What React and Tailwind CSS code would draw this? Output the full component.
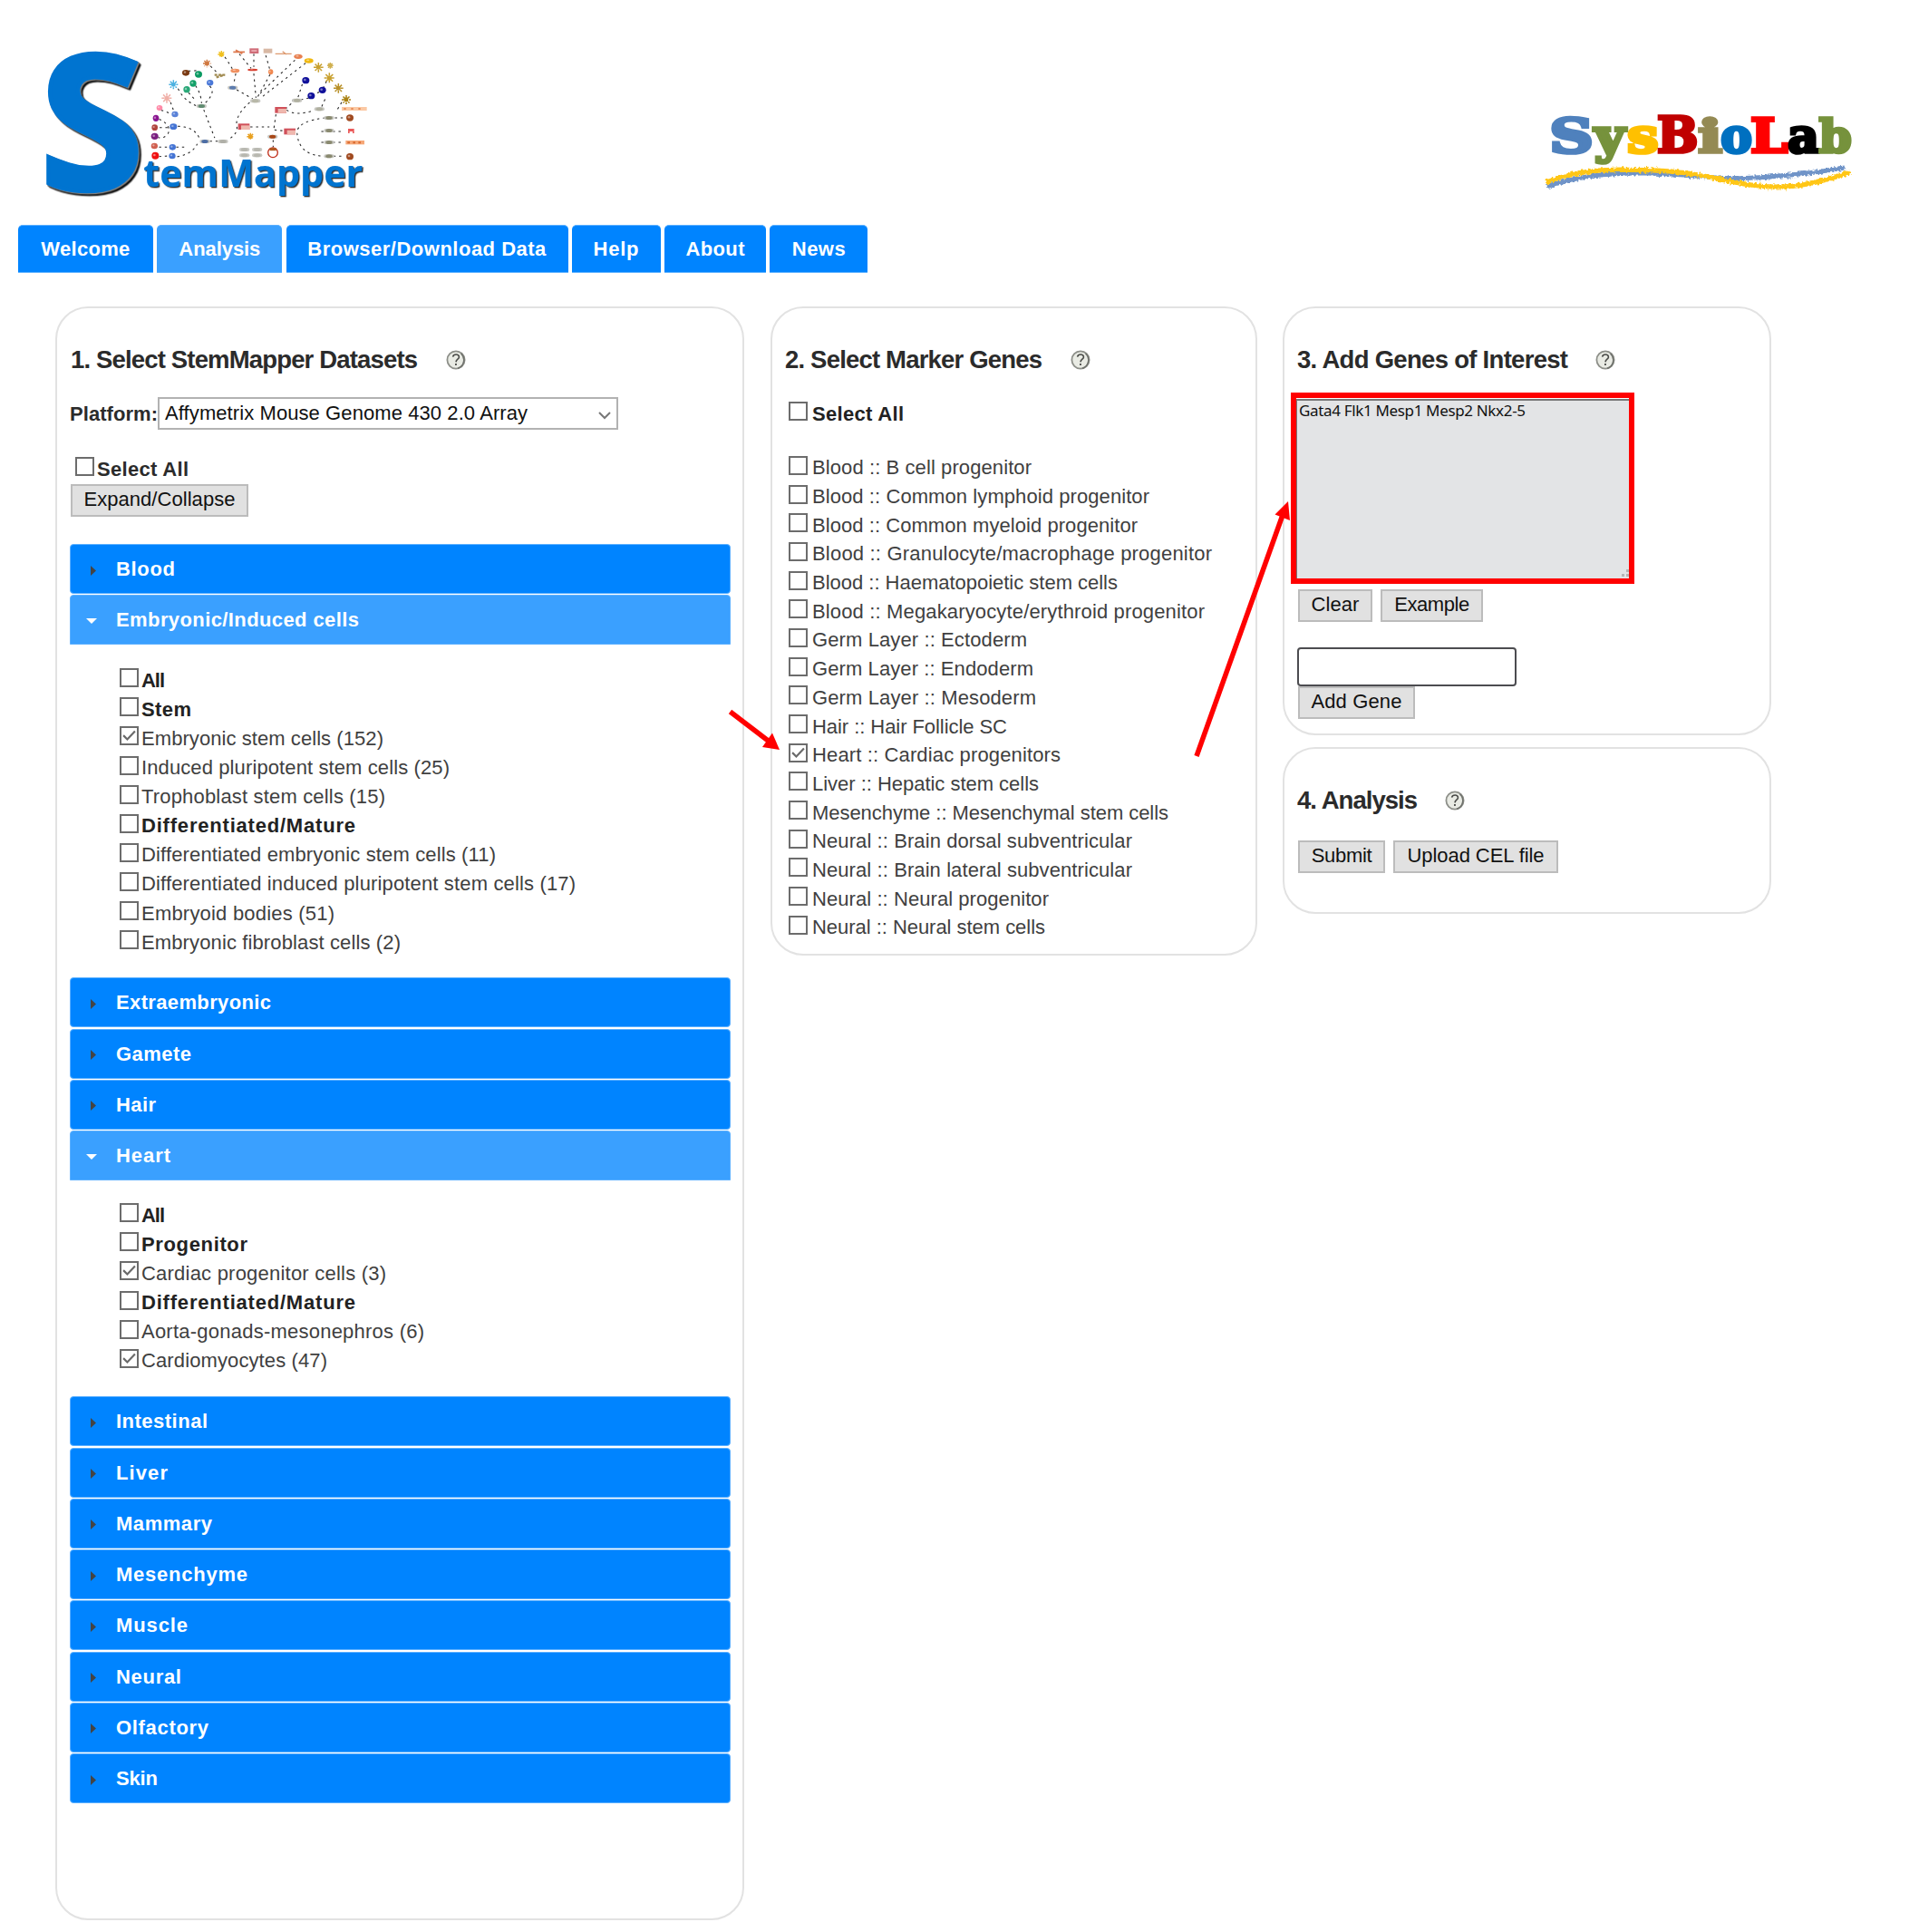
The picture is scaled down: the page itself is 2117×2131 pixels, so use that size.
import React, { useLayoutEffect, useRef } from "react";

/* Text tracked out (or in) so that it fills exactly `w` pixels. */
function Fit({ w, className = "", children }) {
  const ref = useRef(null);
  useLayoutEffect(() => {
    const el = ref.current;
    el.style.letterSpacing = "0px";
    const natural = el.getBoundingClientRect().width;
    el.style.letterSpacing = (w - natural) / Math.max(1, children.length - 1) + "px";
  }, [w, children]);
  return (
    <span ref={ref} className={"inline-block whitespace-pre " + className}>
      {children}
    </span>
  );
}

const blobs = [
  ["#7a3a12", 525, 151, 12, 10], ["#0a9a62", 567, 156, 12, 11], ["#12a068", 549, 186, 11, 11], ["#2aa878", 528, 206, 11, 11],
  ["#4a78d8", 605, 184, 11, 10], ["#5a82d8", 489, 288, 11, 10], ["#4474d4", 484, 329, 12, 10], ["#4474d4", 481, 397, 11, 10], ["#4474d4", 480, 426, 11, 10],
  ["#ff8aa8", 438, 267, 10, 9], ["#8a1590", 426, 301, 10, 11], ["#b0443c", 422, 332, 10, 10], ["#7a2080", 422, 361, 12, 11], ["#d06050", 421, 393, 11, 10], ["#f01010", 424, 425, 12, 12],
  ["#10109a", 922, 176, 12, 11], ["#10109a", 977, 208, 12, 11], ["#10109a", 940, 227, 12, 11],
  ["#a04a20", 1068, 300, 12, 11], ["#a04a20", 1068, 428, 12, 11], ["#e88050", 897, 97, 14, 8], ["#f0b810", 932, 111, 15, 8],
  ["#f09060", 688, 144, 15, 7], ["#d84030", 746, 141, 17, 4], ["#f08850", 806, 148, 8, 9],
];
const pills = [
  ["#5d7cae", 680, 200], ["#b8b8a8", 755, 244], ["#5f8a70", 577, 261], ["#4d6ea5", 588, 378], ["#b0b0a8", 648, 378],
  ["#b0b0a0", 893, 242], ["#b0b0a0", 967, 271], ["#8a8a70", 999, 300], ["#8a8a70", 999, 342], ["#8a8a70", 999, 381], ["#8a8a70", 999, 427],
  ["#b8b8b0", 719, 405], ["#b8b8b0", 761, 405], ["#b8b8b0", 719, 424], ["#b8b8b0", 761, 424], ["#a84818", 812, 362],
];
const stars = [
  ["#f0c020", 643, 90, 12], ["#d07840", 595, 120, 13], ["#4ab0e0", 484, 190, 15], ["#f0b0a8", 462, 235, 17],
  ["#c8a030", 964, 133, 16], ["#d0b050", 1003, 127, 10], ["#c8a030", 1000, 168, 17], ["#b89028", 1030, 202, 16], ["#a88010", 1056, 240, 15], ["#e8a020", 739, 362, 12],
];
const links = [
  "M655 100 Q672 125 680 140", "M608 130 L628 150", "M703 90 L740 135", "M750 90 V130", "M790 95 L803 140", "M690 155 L683 190",
  "M695 208 L745 236", "M750 155 L757 232", "M803 158 L762 232", "M885 110 L765 225", "M920 120 L778 230", "M535 145 L572 143",
  "M558 195 Q575 220 577 250", "M605 196 Q625 215 590 250", "M500 205 Q520 245 565 262", "M535 218 L560 245", "M585 275 L620 365",
  "M735 250 Q690 290 693 325 Q700 350 668 370", "M475 250 L486 280", "M445 275 Q462 280 477 288", "M438 305 Q480 325 465 355 Q450 370 435 365",
  "M440 332 H470", "M500 328 Q555 330 570 368", "M438 397 H525", "M438 428 L470 426", "M498 428 Q545 420 562 388", "M606 377 H632",
  "M740 330 H800", "M823 290 L815 345", "M855 270 Q890 240 878 243", "M860 275 Q890 295 950 275", "M820 340 L850 343",
  "M910 190 L897 230", "M930 235 L905 240", "M965 215 L950 222", "M990 180 L980 200", "M985 240 L975 262", "M1040 250 L1025 275",
  "M985 300 Q900 310 893 345 Q895 425 985 427", "M1020 300 H1052", "M975 345 H1045", "M975 381 H1045", "M1015 427 H1050", "M814 375 V395",
];

function StemMapperLogo() {
  return (
    <svg viewBox="0 0 1200 630" className="h-[210px] w-[400px] overflow-visible" role="img" aria-label="StemMapper">
      <g fill="none" stroke="#222" strokeWidth="3.2" strokeDasharray="4 15" strokeLinecap="square">
        {links.map((d) => <path key={d} d={d} />)}
      </g>
      {blobs.map(([c, x, y, rx, ry]) => (
        <g key={x + "-" + y}>
          <ellipse cx={x} cy={y} rx={rx} ry={ry} fill={c} />
          <ellipse cx={x - 3} cy={y - 2} rx={rx / 3} ry={ry / 3} fill="#fff" opacity=".45" />
        </g>
      ))}
      {pills.map(([c, x, y]) => (
        <g key={x + "-" + y}>
          <rect x={x - 17} y={y - 6} width="34" height="12" rx="6" fill="#c9c9c4" />
          <ellipse cx={x} cy={y} rx="11" ry="6" fill={c} />
        </g>
      ))}
      {stars.map(([c, x, y, r]) => (
        <g key={x + "-" + y} stroke={c} strokeWidth="4.5">
          <path d={`M${x - r} ${y}H${x + r}M${x} ${y - r}V${y + r}M${x - r * 0.7} ${y - r * 0.7}L${x + r * 0.7} ${y + r * 0.7}M${x + r * 0.7} ${y - r * 0.7}L${x - r * 0.7} ${y + r * 0.7}`} strokeDasharray="9 3" />
          <circle cx={x} cy={y} r={r / 3} fill={c} />
        </g>
      ))}
      {[[820, 264], [698, 319], [850, 335]].map(([x, y]) => (
        <g key={x}>
          <rect x={x} y={y} width="38" height="20" fill="#d0505a" />
          <rect x={x + 10} y={y + 6} width="28" height="14" fill="#efb8ae" />
        </g>
      ))}
      <rect x="736" y="70" width="30" height="17" fill="#cf6c78" />
      <path d="M742 78H760" stroke="#f4c0c4" strokeWidth="4" />
      <rect x="782" y="71" width="29" height="15" fill="#d8b8a4" />
      <path d="M682 82H720M690 76L712 88" stroke="#dd7a50" strokeWidth="5" />
      <path d="M821 88H875M845 80L858 90" stroke="#dd9a70" strokeWidth="4" />
      <path d="M620 158H658M626 166L652 158" stroke="#a08a50" strokeWidth="7" strokeDasharray="9 4" />
      <rect x="1041" y="264" width="83" height="12" fill="#fbc9a4" />
      <path d="M1048 270H1116" stroke="#e07840" strokeWidth="4" strokeDasharray="7 17" />
      <path d="M1062 336H1082V351H1077V345H1067V351H1062Z" fill="#ea5b5b" />
      <rect x="1054" y="375" width="62" height="13" fill="#f6a878" />
      <path d="M1060 382H1112" stroke="#d86a30" strokeWidth="6" strokeDasharray="8 10" />
      <circle cx="813" cy="415" r="16" fill="none" stroke="#c0301c" strokeWidth="4" />
      <path d="M803 404H824" stroke="#b05a20" strokeWidth="9" />
      <g fontFamily="'Open Sans','Noto Sans',sans-serif" fontWeight="700" fill="#0074d0" stroke="#0074d0">
        <text x="42" y="538" fontSize="622" textLength="344" lengthAdjust="spacingAndGlyphs" strokeWidth="14" className="[filter:drop-shadow(4px_4px_0_#808080)_drop-shadow(5px_5px_0_#000)]">S</text>
        <text x="385" y="527" fontSize="124" textLength="726" lengthAdjust="spacingAndGlyphs" strokeWidth="0.5" className="[filter:drop-shadow(4px_4px_0_#333)]">temMapper</text>
      </g>
    </svg>
  );
}

const labLetters = [
  ["S", 88, 146, "#4f81bd", 158], ["y", 236, 102, "#76923c", 156], ["s", 345, 104, "#ffc000", 154],
  ["B", 444, 136, "#c00000", 160], ["i", 580, 80, "#948a54", 150], ["o", 655, 104, "#0070c0", 154],
  ["L", 753, 124, "#ff0000", 156], ["a", 877, 104, "#000000", 156], ["b", 980, 108, "#76923c", 150],
];

function SysBioLabLogo() {
  return (
    <svg viewBox="0 0 1200 360" className="h-[120px] w-[400px] overflow-visible" role="img" aria-label="SysBioLab">
      <defs>
        <filter id="crayon" x="-5%" y="-30%" width="110%" height="160%">
          <feTurbulence type="fractalNoise" baseFrequency="0.12" numOctaves="2" seed="4" result="n" />
          <feDisplacementMap in="SourceGraphic" in2="n" scale="16" xChannelSelector="R" yChannelSelector="G" />
        </filter>
      </defs>
      <g fontFamily="'DejaVu Serif',serif" fontWeight="700">
        {labLetters.map(([ch, x, w, c, size]) => (
          <text key={x} x={x} y="174" fontSize={size} textLength={w} lengthAdjust="spacingAndGlyphs" fill={c} stroke={c} strokeWidth="11" strokeLinejoin="miter">{ch}</text>
        ))}
      </g>
      <g fill="none" filter="url(#crayon)">
        <path d="M80 287 C180 255 260 243 400 243 C560 245 610 262 720 260 C860 256 950 245 1065 225" stroke="#6f94c8" strokeWidth="15" />
        <path d="M75 273 C170 240 230 230 350 232 C560 232 620 260 740 280 C860 300 950 285 1083 240" stroke="#ffc619" strokeWidth="16" />
      </g>
    </svg>
  );
}

function HelpIcon() {
  return (
    <svg viewBox="0 0 22 22" className="size-[22px] shrink-0">
      <circle cx="11" cy="11" r="9.6" fill="#e9ebe4" stroke="#8d8f89" strokeWidth="1.8" />
      <path d="M16.5 4A9.5 9.5 0 0 1 13 20.2" fill="none" stroke="#6e706b" strokeWidth="1.5" />
      <path d="M7.6 7.6C8 5.6 9.6 5 11.2 5C13.2 5 14.6 6.2 14.4 8.1C14.2 10.2 11.2 10.3 11 13.4" fill="none" stroke="#4a4b48" strokeWidth="1.6" />
      <rect x="10" y="15" width="1.9" height="1.9" fill="#4a4b48" />
    </svg>
  );
}

function Box({ checked }) {
  return (
    <span className="-mt-[5px] flex size-[21px] shrink-0 items-center justify-center border-2 border-[#6c6c6c] bg-white">
      {checked && (
        <svg viewBox="0 0 18 18" className="size-[17px] shrink-0">
          <path d="M2.2 8.6L6.8 13.2L15.8 3.8" fill="none" stroke="#6a6a6a" strokeWidth="2.3" />
        </svg>
      )}
    </span>
  );
}

function Heading({ w, gap, children }) {
  return (
    <h2 className="flex h-8 items-center text-[27.5px] font-bold leading-8 text-[#2b2b2b]">
      <Fit w={w}>{children}</Fit>
      <span className={gap}><HelpIcon /></span>
    </h2>
  );
}

function Button({ className, w, children }) {
  return (
    <button className={"flex h-9 items-center justify-center border-2 border-[#bcbcbc] bg-[#e1e1e1] pb-[2px] text-[22px] leading-none text-[#111] " + className}>
      <Fit w={w}>{children}</Fit>
    </button>
  );
}

const tabs = [
  ["Welcome", "w-[149px]", 98], ["Analysis", "w-[138px] bg-[#3aa0ff]", 90], ["Browser/Download Data", "w-[311px]", 263],
  ["Help", "w-[98px]", 50], ["About", "w-[112px]", 65], ["News", "w-[108px]", 59],
];

const embryonic = [
  ["All", 26, "b"], ["Stem", 55, "b"], ["Embryonic stem cells (152)", 267, "", true], ["Induced pluripotent stem cells (25)", 340],
  ["Trophoblast stem cells (15)", 269], ["Differentiated/Mature", 236, "b"], ["Differentiated embryonic stem cells (11)", 391],
  ["Differentiated induced pluripotent stem cells (17)", 479], ["Embryoid bodies (51)", 213], ["Embryonic fibroblast cells (2)", 286],
];
const heart = [
  ["All", 26, "b"], ["Progenitor", 117, "b"], ["Cardiac progenitor cells (3)", 270, "", true], ["Differentiated/Mature", 236, "b"],
  ["Aorta-gonads-mesonephros (6)", 312], ["Cardiomyocytes (47)", 205, "", true],
];
const groups = [
  ["Blood", 65], ["Embryonic/Induced cells", 268, embryonic, "pt-[23px] pb-[22px]"], ["Extraembryonic", 171], ["Gamete", 83], ["Hair", 44],
  ["Heart", 60, heart, "pt-[22px] pb-[22.4px]"], ["Intestinal", 101], ["Liver", 57], ["Mammary", 106], ["Mesenchyme", 145],
  ["Muscle", 79], ["Neural", 72], ["Olfactory", 102], ["Skin", 46],
];
const markers = [
  ["Blood :: B cell progenitor", 242], ["Blood :: Common lymphoid progenitor", 372], ["Blood :: Common myeloid progenitor", 359],
  ["Blood :: Granulocyte/macrophage progenitor", 441], ["Blood :: Haematopoietic stem cells", 337], ["Blood :: Megakaryocyte/erythroid progenitor", 433],
  ["Germ Layer :: Ectoderm", 237], ["Germ Layer :: Endoderm", 244], ["Germ Layer :: Mesoderm", 247], ["Hair :: Hair Follicle SC", 215],
  ["Heart :: Cardiac progenitors", 274, true], ["Liver :: Hepatic stem cells", 250], ["Mesenchyme :: Mesenchymal stem cells", 393],
  ["Neural :: Brain dorsal subventricular", 353], ["Neural :: Brain lateral subventricular", 353], ["Neural :: Neural progenitor", 261], ["Neural :: Neural stem cells", 257],
];

function Group({ name, w, rows, pad }) {
  return (
    <div>
      <div className={"flex h-[55px] items-center border border-[#5cb0ff] " + (rows ? "rounded-t-[4px] bg-[#3aa0ff]" : "rounded-[4px] bg-[#0084ff]")}>
        <span className="flex w-[50px] items-center pl-[17px] pt-[3px]">
          {rows ? (
            <svg viewBox="0 0 12 6" className="h-[6px] w-[12px]"><path d="M0 0H12L6 6Z" fill="#fff" /></svg>
          ) : (
            <svg viewBox="0 0 6 11" className="ml-[5px] h-[11px] w-[6px]"><path d="M0 0L6 5.5L0 11Z" fill="#444" /></svg>
          )}
        </span>
        <Fit w={w} className="text-[22px] font-bold text-white">{name}</Fit>
      </div>
      {rows && (
        <div className={"pl-[55px] " + pad}>
          {rows.map(([label, lw, bold, checked], i) => (
            <label key={i} className="flex h-[32.1px] items-center gap-[3px]">
              <Box checked={checked} />
              <Fit w={lw} className={bold ? "text-[22px] font-bold text-[#222]" : "text-[22px] text-[#404040]"}>{label}</Fit>
            </label>
          ))}
        </div>
      )}
    </div>
  );
}

export default function App() {
  return (
    <div className="relative h-[2131px] w-[2117px] overflow-hidden bg-white font-['Liberation_Sans',Arial,sans-serif]">
      <header className="flex h-[248px] justify-between pl-[30px] pr-[37px]">
        <div className="pt-[30px]"><StemMapperLogo /></div>
        <div className="pt-[110px]"><SysBioLabLogo /></div>
      </header>

      <nav className="flex gap-[4.3px] pl-[20px]">
        {tabs.map(([t, cls, w]) => (
          <a key={t} className={"flex h-[53px] items-center justify-center rounded-t-[5px] border-y border-[#5cb0ff] text-[22px] font-bold text-white " + (t === "Analysis" ? cls : cls + " bg-[#0084ff]")}>
            <Fit w={w}>{t}</Fit>
          </a>
        ))}
      </nav>

      <main className="mt-[37px] flex items-start gap-[28px] pl-[61px]">
        <section className="h-[1780px] w-[760px] rounded-[36px] border-2 border-[#e2e2e2] pl-[14px] pt-[41px]">
          <div className="pl-px"><Heading w={383} gap="ml-[32px]">1. Select StemMapper Datasets</Heading></div>
          <div className="mt-[25px] flex h-[36px] items-center">
            <Fit w={97} className="text-[22px] font-bold text-[#2b2b2b]">Platform:</Fit>
            <div className="flex h-[36px] w-[508px] items-center justify-between border-2 border-[#b2b2b2] pl-[6px] pr-[6px] text-[22px] leading-none text-[#111]">
              <Fit w={400}>Affymetrix Mouse Genome 430 2.0 Array</Fit>
              <svg viewBox="0 0 14 10" className="mt-1 h-[10px] w-[14px]"><path d="M1 2L7 8L13 2" fill="none" stroke="#777" strokeWidth="2" /></svg>
            </div>
          </div>
          <label className="mt-[27px] flex h-[32px] items-center gap-[3px] pl-[6px]">
            <Box />
            <Fit w={101} className="text-[22px] font-bold text-[#2b2b2b]">Select All</Fit>
          </label>
          <div className="mt-px pl-px"><Button className="w-[196px]" w={167}>Expand/Collapse</Button></div>
          <div className="mt-[30px] flex w-[729px] flex-col gap-[1.25px]">
            {groups.map(([name, w, rows, pad]) => <Group key={name} name={name} w={w} rows={rows} pad={pad} />)}
          </div>
        </section>

        <section className="ml-px h-[716px] w-[537px] rounded-[36px] border-2 border-[#e2e2e2] pl-[14px] pt-[41px]">
          <Heading w={284} gap="ml-[32px]">2. Select Marker Genes</Heading>
          <label className="mt-[27px] flex h-[32px] items-center gap-[5px] pl-[4px]">
            <Box />
            <Fit w={101} className="text-[22px] font-bold text-[#222]">Select All</Fit>
          </label>
          <div className="mt-[28px] pl-[4px]">
            {markers.map(([label, w, checked]) => (
              <label key={label} className="flex h-[31.7px] items-center gap-[5px]">
                <Box checked={checked} />
                <Fit w={w} className="text-[22px] text-[#404040]">{label}</Fit>
              </label>
            ))}
          </div>
        </section>

        <div className="flex flex-col gap-[13px]">
          <section className="h-[473px] w-[539px] rounded-[36px] border-2 border-[#e2e2e2] pl-[14px] pt-[41px]">
            <Heading w={299} gap="ml-[31px]">3. Add Genes of Interest</Heading>
            <div className="-ml-[7px] mt-[20px] h-[211px] w-[379px] border-[6px] border-[#ff0000] pt-px">
              <div className="flex h-[198px] justify-between border-l border-t-2 border-[#777] bg-[#e3e4e6] pl-[2px]">
                <Fit w={250} className="font-['Noto_Sans',sans-serif] text-[17px] leading-[22px] text-[#111]">Gata4 Flk1 Mesp1 Mesp2 Nkx2-5</Fit>
                <svg viewBox="0 0 10 10" className="-mr-[2px] size-[10px] self-end"><path d="M5 0H8V3H5ZM0 5H3V8H0ZM5 5H8V8H5Z" fill="#b4b4b4" /></svg>
              </div>
            </div>
            <div className="mt-[6px] flex gap-[9px] pl-px">
              <Button className="w-[82px]" w={53}>Clear</Button>
              <Button className="w-[113px]" w={83}>Example</Button>
            </div>
            <div className="mt-[28px] h-[43px] w-[242px] rounded-[4px] border-2 border-[#4c4c50]" />
            <div className="pl-px"><Button className="w-[129px]" w={100}>Add Gene</Button></div>
          </section>

          <section className="h-[184px] w-[539px] rounded-[36px] border-2 border-[#e2e2e2] pl-[14px] pt-[41px]">
            <Heading w={133} gap="ml-[31px]">4. Analysis</Heading>
            <div className="mt-[28px] flex gap-[9px] pl-px">
              <Button className="w-[96px]" w={67}>Submit</Button>
              <Button className="w-[182px]" w={151}>Upload CEL file</Button>
            </div>
          </section>
        </div>
      </main>

      <svg viewBox="800 540 640 300" className="pointer-events-none absolute left-[800px] top-[540px] h-[300px] w-[640px]">
        <g stroke="#f00" strokeWidth="5.5">
          <path d="M805.5 785L850 819" />
          <path d="M1320 834L1415 568" />
        </g>
        <path d="M860 827L841 824L852 808.5Z" fill="#f00" />
        <path d="M1421 553L1406.5 567.5L1423 574Z" fill="#f00" />
      </svg>
    </div>
  );
}
